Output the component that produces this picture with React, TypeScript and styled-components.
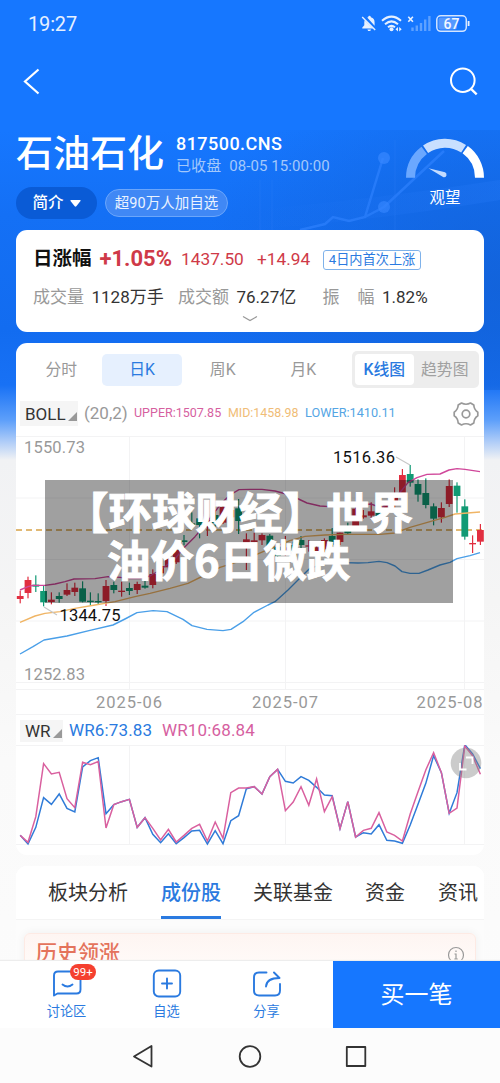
import React from "react";
import styled, { createGlobalStyle } from "styled-components";

const Global = createGlobalStyle`
  *{box-sizing:border-box}
  html,body{margin:0;padding:0}
  body{width:500px;height:1083px;overflow:hidden;font-family:Roboto,"Noto Sans CJK SC",sans-serif;}
  svg{display:block}
`;

const BLUE = "#1677ff";
const INK = "#2a7ae0";
const PINK = "#d6609f";
const RED = "#cf3a48";

const Screen = styled.div`
  position: relative;
  width: 500px;
  height: 1083px;
  overflow: hidden;
  display: flex;
  flex-direction: column;
  background: linear-gradient(180deg, ${BLUE} 0, ${BLUE} 130px, #1470f5 215px, #126cf0 330px, #1871f5 385px, #5d9ffa 420px, #a9c9f8 440px, #f1f2f4 460px, #f5f5f5 600px, #fafafa 760px, #fcfcfc 1083px);
`;
const HeroArt = styled.svg`
  position: absolute;
  left: 0;
  top: 0;
`;
const Main = styled.main`
  position: relative;
  flex: none;
  height: 961px;
  overflow: hidden;
  display: flex;
  flex-direction: column;
`;

/* ---------- header ---------- */
const StatusBar = styled.header`
  flex: none;
  height: 47px;
  padding: 0 28px 0 28px;
  display: flex;
  align-items: center;
  justify-content: space-between;
  color: #e6f0ff;
`;
const Clock = styled.span`
  font-size: 20px;
  line-height: 20px;
  letter-spacing: -0.15px;
`;
const NavBar = styled.nav`
  flex: none;
  height: 69px;
  padding: 0 21px 0 22px;
  display: flex;
  align-items: center;
  justify-content: space-between;
`;
const Hero = styled.section`
  flex: none;
  height: 114px;
  padding: 16px 15px 0 16px;
  display: flex;
  justify-content: space-between;
  color: #fff;
`;
const TitleRow = styled.div`
  display: flex;
  height: 46px;
  align-items: center;
`;
const Title = styled.h1`
  margin: 0;
  width: 160px;
  font-size: 37px;
  line-height: 46px;
  font-weight: 500;
  white-space: nowrap;
`;
const Code = styled.div`
  font-size: 18px;
  line-height: 22px;
  font-weight: 500;
  letter-spacing: 0.45px;
`;
const Closed = styled.div`
  display: flex;
  gap: 8px;
  font-size: 15px;
  line-height: 22px;
  letter-spacing: 0.08px;
  color: #a3c8fb;
  white-space: nowrap;
`;
const TagRow = styled.div`
  display: flex;
  align-items: center;
  gap: 8px;
  margin-top: 9px;
`;
const Intro = styled.button`
  width: 81px;
  height: 32px;
  border: 0;
  border-radius: 16px;
  background: #0a5bd6;
  color: #fff;
  font: 500 15.5px/32px Roboto, "Noto Sans CJK SC", sans-serif;
  padding: 0;
  display: flex;
  align-items: center;
  justify-content: center;
  gap: 6px;
`;
const Followers = styled.span`
  width: 123px;
  height: 28px;
  border: 1px solid #6ba6fb;
  border-radius: 14px;
  background: #4088f5;
  font-size: 14.5px;
  line-height: 27px;
  text-align: center;
  color: #eaf3ff;
  white-space: nowrap;
`;
const Gauge = styled.div`
  width: 80px;
  padding-top: 6px;
  display: flex;
  flex-direction: column;
  align-items: center;
  gap: 9px;
  font-size: 15.5px;
  line-height: 22px;
`;

/* ---------- cards ---------- */
const Card = styled.section<{ $h: number; $gap?: number; $open?: boolean }>`
  flex: none;
  width: 468px;
  height: ${(p) => p.$h}px;
  margin: 0 16px ${(p) => p.$gap ?? 11}px;
  background: #fff;
  border-radius: ${(p) => (p.$open ? "11px 11px 0 0" : "11px")};
  overflow: hidden;
`;
const QuoteRow = styled.div<{ $h: number }>`
  height: ${(p) => p.$h}px;
  display: flex;
  align-items: center;
  padding-left: 17px;
`;
const Text = styled.span<{ $w?: number; $s: number; $c: string; $b?: number; $ls?: number }>`
  flex: none;
  width: ${(p) => (p.$w ? p.$w + "px" : "auto")};
  font-size: ${(p) => p.$s}px;
  color: ${(p) => p.$c};
  font-weight: ${(p) => p.$b ?? 400};
  letter-spacing: ${(p) => p.$ls ?? 0}px;
  line-height: 1.3;
  white-space: nowrap;
`;
const RiseTag = styled.span`
  width: 98px;
  height: 20px;
  margin-top: 2px;
  border: 1px solid #7fb2ea;
  border-radius: 3px;
  color: ${INK};
  font-size: 13.2px;
  line-height: 18px;
  text-align: center;
  white-space: nowrap;
`;
const Expand = styled.div`
  display: flex;
  justify-content: center;
`;

/* ---------- chart card ---------- */
const PeriodRow = styled.div`
  height: 53px;
  display: flex;
  align-items: center;
  padding-left: 5px;
`;
const Period = styled.button<{ $on?: boolean }>`
  flex: none;
  width: 80.7px;
  height: 32px;
  border: 0;
  padding: 0;
  border-radius: 5px;
  background: ${(p) => (p.$on ? "#e6f0fe" : "transparent")};
  color: ${(p) => (p.$on ? INK : "#999")};
  font: 400 15.8px/32px Roboto, "Noto Sans CJK SC", sans-serif;
`;
const Toggle = styled.div`
  flex: none;
  width: 127px;
  height: 37px;
  margin-left: 8px;
  padding: 3px;
  border-radius: 5px;
  background: #ededed;
  display: flex;
`;
const ToggleItem = styled.button<{ $on?: boolean }>`
  width: ${(p) => (p.$on ? 59 : 62)}px;
  height: 31px;
  border: 0;
  padding: 0;
  border-radius: 4px;
  white-space: nowrap;
  background: ${(p) => (p.$on ? "#fff" : "transparent")};
  color: ${(p) => (p.$on ? INK : "#a0a0a0")};
  font: ${(p) => (p.$on ? 500 : 400)} 15.8px/31px Roboto, "Noto Sans CJK SC", sans-serif;
`;
const IndicatorRow = styled.div<{ $h: number }>`
  height: ${(p) => p.$h}px;
  padding: 1px 5px 0 4px;
  display: flex;
  align-items: center;
`;
const Picker = styled.span<{ $w: number; $h: number }>`
  flex: none;
  width: ${(p) => p.$w}px;
  height: ${(p) => p.$h}px;
  margin-right: 6px;
  padding-left: 5px;
  background: #f5f5f5;
  color: #333;
  font-size: 17px;
  display: flex;
  align-items: center;
  gap: 2px;
`;
const Spacer = styled.span`
  flex: 1;
`;

/* ---------- sections ---------- */
const Tabs = styled.div`
  height: 54px;
  padding-left: 32px;
  display: flex;
  background: #fff;
  border-bottom: 1px solid #f4f4f4;
`;
const Tab = styled.span<{ $w: number; $mr: number; $on?: boolean }>`
  flex: none;
  width: ${(p) => p.$w}px;
  margin-right: ${(p) => p.$mr}px;
  height: 53px;
  font-size: 20px;
  line-height: 54px;
  white-space: nowrap;
  font-weight: ${(p) => (p.$on ? 500 : 400)};
  color: ${(p) => (p.$on ? INK : "#333")};
  border-bottom: ${(p) => (p.$on ? `3px solid ${INK}` : "0")};
`;
const SectionBody = styled.div`
  height: 60px;
  padding: 13px 8px 0;
  background: #fcfcfc;
`;
const Leaders = styled.div`
  height: 60px;
  padding: 6px 10px 0 11px;
  border: 1px solid #fdeae4;
  border-radius: 6px;
  background: linear-gradient(180deg, #fef5f2, #fffaf8 28px);
  box-shadow: 0 0 10px rgba(0, 0, 0, 0.06);
  display: flex;
  justify-content: space-between;
`;

/* ---------- bottom ---------- */
const ActionBar = styled.footer`
  position: relative;
  flex: none;
  height: 67px;
  display: flex;
  background: #fff;
  box-shadow: 0 -1px 1px #ededed;
`;
const Action = styled.div<{ $w: number }>`
  position: relative;
  width: ${(p) => p.$w}px;
  padding-top: 8px;
  display: flex;
  flex-direction: column;
  align-items: center;
  font-size: 13.2px;
  line-height: 20px;
  color: ${INK};
`;
const ActionLabel = styled.span`
  margin-top: 3px;
`;
const Badge = styled.span`
  position: absolute;
  left: 70px;
  top: 3px;
  width: 26px;
  height: 16px;
  border-radius: 8px;
  background: #f5402f;
  color: #fff;
  font-size: 11.5px;
  line-height: 16px;
  text-align: center;
`;
const Buy = styled.button`
  flex: 1;
  border: 0;
  padding: 0;
  background: ${BLUE};
  color: #fff;
  font: 400 24px/66px Roboto, "Noto Sans CJK SC", sans-serif;
`;
const SystemNav = styled.div`
  height: 55px;
  background: #fcfcfc;
  display: flex;
  align-items: center;
  padding-left: 132px;
`;

const Caption = styled.div`
  position: absolute;
  left: 45px;
  top: 480px;
  width: 408px;
  height: 123px;
  padding: 7px 0 0 20px;
  background: rgba(0, 0, 0, 0.373);
  color: #fff;
  font: 700 43.5px/48px "Noto Sans CJK SC", sans-serif;
  -webkit-text-stroke: 1px #fff;
  white-space: nowrap;
`;
const CaptionLine = styled.div<{ $indent?: number }>`
  padding-left: ${(p) => p.$indent ?? 0}px;
`;

/* ---------- data: y values are thirds of a pixel below the panel top ---------- */
type Candle = [up: 0 | 1, top: number, bottom: number, high: number, low: number];
const candles: Candle[] = [
  [1, 498, 507, 482, 520], [1, 450, 489, 440, 505], [0, 464, 470, 436, 486], [0, 483, 517, 468, 529],
  [1, 509, 516, 487, 523], [0, 498, 507, 487, 518], [1, 480, 494, 460, 498], [1, 473, 486, 458, 498],
  [0, 475, 515, 454, 517], [0, 512, 516, 487, 527], [0, 513, 517, 490, 525], [1, 468, 513, 450, 528],
  [0, 465, 480, 455, 490], [1, 482, 486, 455, 500], [0, 474, 483, 458, 495], [1, 462, 480, 455, 492],
  [0, 467, 473, 453, 476], [1, 432, 465, 418, 475], [1, 408, 430, 400, 440], [1, 385, 412, 375, 422],
  [1, 360, 397, 350, 402], [0, 331, 336, 315, 346], [0, 280, 286, 247, 300], [0, 265, 285, 240, 325],
  [1, 270, 286, 240, 318], [0, 255, 280, 240, 290], [1, 231, 278, 228, 282], [1, 240, 262, 232, 270],
  [0, 235, 273, 207, 312], [1, 328, 341, 310, 420], [1, 331, 336, 308, 350], [1, 315, 331, 310, 345],
  [0, 317, 350, 312, 355], [0, 350, 378, 345, 383], [1, 352, 370, 318, 378], [0, 345, 380, 335, 384],
  [0, 330, 345, 318, 370], [1, 346, 350, 330, 365], [1, 352, 365, 344, 372], [1, 330, 358, 325, 366],
  [0, 318, 344, 294, 350], [1, 308, 336, 308, 345], [0, 296, 310, 278, 315], [1, 236, 290, 230, 292],
  [1, 256, 262, 240, 266], [1, 244, 257, 217, 268], [0, 246, 258, 240, 264], [1, 225, 248, 215, 252],
  [1, 190, 225, 172, 235], [1, 135, 195, 117, 237], [0, 132, 158, 105, 170], [0, 162, 194, 148, 215],
  [0, 189, 225, 145, 235], [0, 229, 266, 220, 286], [1, 234, 262, 217, 278], [1, 168, 222, 148, 231],
  [0, 167, 198, 157, 248], [0, 229, 320, 208, 329], [1, 339, 343, 316, 369], [1, 300, 335, 282, 345],
];
const upper = [[20, 480], [28, 470], [33, 466], [45, 466], [55, 462], [65, 455], [74, 447], [95, 446], [108, 440], [120, 442], [130, 446], [140, 446], [150, 438], [160, 420], [175, 387], [184, 353], [195, 320], [204, 288], [215, 245], [222, 218], [230, 195], [239, 179], [250, 178], [262, 178], [275, 183], [290, 195], [307, 219], [320, 228], [330, 230], [350, 229], [362, 224], [371, 222], [378, 230], [383, 231], [392, 213], [402, 180], [408, 158], [417, 143], [427, 133], [440, 132], [449, 120], [457, 116], [465, 118], [480, 125]];
const middle = [[20, 577], [35, 558], [45, 550], [60, 545], [75, 535], [95, 525], [115, 515], [135, 500], [150, 490], [170, 475], [188, 460], [205, 435], [220, 412], [235, 398], [252, 379], [275, 350], [290, 332], [305, 319], [325, 315], [345, 313], [380, 313], [395, 309], [410, 292], [430, 275], [445, 262], [455, 252], [480, 246]];
const lower = [[20, 672], [33, 650], [44, 630], [67, 618], [90, 601], [113, 585], [125, 567], [137, 548], [153, 542], [167, 545], [183, 568], [192, 587], [207, 598], [223, 602], [231, 598], [243, 575], [254, 547], [268, 525], [275, 515], [288, 480], [303, 435], [310, 415], [325, 400], [345, 398], [358, 399], [368, 398], [379, 394], [387, 398], [395, 408], [402, 425], [410, 430], [419, 430], [428, 420], [440, 405], [450, 397], [457, 386], [470, 377], [480, 368]];
const wr10 = [376, 397, 320, 161, 192, 187, 266, 293, 157, 164, 155, 354, 284, 275, 268, 352, 323, 355, 390, 358, 396, 376, 355, 343, 393, 336, 385, 248, 234, 234, 230, 252, 200, 178, 302, 276, 230, 286, 207, 305, 260, 356, 275, 381, 361, 355, 308, 366, 376, 393, 312, 245, 180, 128, 188, 310, 294, 108, 137, 193];
const wr6 = [376, 402, 352, 263, 283, 252, 295, 306, 171, 152, 143, 311, 284, 275, 268, 352, 323, 373, 398, 371, 401, 383, 363, 361, 402, 362, 401, 332, 317, 236, 230, 252, 200, 178, 214, 219, 200, 211, 232, 255, 257, 356, 275, 381, 368, 372, 344, 391, 393, 400, 345, 283, 220, 137, 188, 310, 248, 104, 132, 176];

const xAt = (i: number) => 20.2 + 7.8 * i;
const band = (pts: number[][]) => pts.map(([x, y]) => `${x},${430 + y / 3}`).join(" ");
const wrLine = (v: number[]) => v.map((y, i) => `${xAt(i)},${710 + y / 3}`).join(" ");

function KLine() {
  return (
    <svg width="468" height="285" viewBox="16 430 468 285" fontFamily="Roboto, sans-serif" fontSize="16.5">
      <g stroke="#f3f3f4" strokeWidth="1">
        {[436.5, 498, 559.5, 621, 682.5, 689.5, 714.5].map((y) => <line key={y} x1="16" x2="484" y1={y} y2={y} />)}
        {[129.5, 285.5, 464.5].map((x) => <line key={x} x1={x} x2={x} y1="436" y2="689" />)}
      </g>
      <line x1="16" x2="484" y1="530" y2="530" stroke="#d8a347" strokeWidth="1.6" strokeDasharray="6 4" />
      {candles.map(([up, t, b, h, l], i) => {
        const c = up ? "#e12e40" : "#119a74";
        return (
          <g key={i} fill={c}>
            <rect x={xAt(i) - 0.6} y={430 + h / 3} width="1.2" height={(l - h) / 3} />
            <rect x={xAt(i) - 3.4} y={430 + t / 3} width="6.8" height={Math.max(1.2, (b - t) / 3)} />
          </g>
        );
      })}
      <g fill="none" strokeWidth="1.4" strokeLinejoin="round">
        <polyline points={band(middle)} stroke="#f0b565" />
        <polyline points={band(upper)} stroke="#d0479a" />
        <polyline points={band(lower)} stroke="#4a9fe8" />
      </g>
      <path d="M44 607l13 8M396 457l14 8" stroke="#c8c8c8" strokeWidth="1.2" />
      <g fill="#999">
        <text x="24" y="452.5" textLength="61">1550.73</text>
        <text x="24" y="680" textLength="61">1252.83</text>
        <text x="96" y="708" textLength="66">2025-06</text>
        <text x="252" y="708" textLength="66">2025-07</text>
        <text x="416.5" y="708" textLength="66">2025-08</text>
      </g>
      <g fill="#111">
        <text x="59.5" y="621" textLength="61">1344.75</text>
        <text x="333" y="463" textLength="62">1516.36</text>
      </g>
    </svg>
  );
}

function WrChart() {
  return (
    <svg width="468" height="110" viewBox="16 745 468 110" fill="none">
      <g stroke="#f3f3f4">
        <line x1="16" x2="484" y1="745.5" y2="745.5" />
        <line x1="16" x2="484" y1="844.5" y2="844.5" />
        {[129.5, 285.5, 464.5].map((x) => <line key={x} x1={x} x2={x} y1="745" y2="844" />)}
      </g>
      <polyline points={wrLine(wr6)} stroke="#2f7bd8" strokeWidth="1.5" />
      <polyline points={wrLine(wr10)} stroke="#d9609f" strokeWidth="1.5" />
      <circle cx="466" cy="763" r="15.3" fill="rgba(130,130,130,.42)" />
      <path d="M466 757.5h6.5v6.5M460 763v6.5h6.5" stroke="#fff" strokeWidth="1.8" />
    </svg>
  );
}

const CornerMark = styled.svg`
  margin-top: 4px;
`;
const Corner = () => (
  <CornerMark width="9" height="10" viewBox="0 0 9 10"><path d="M9 1v9H0z" fill="#999" /></CornerMark>
);
const InfoIcon = styled.svg`
  margin-top: 6px;
`;

function StatusIcons() {
  return (
    <svg width="112" height="20" viewBox="360 14 112 20" fill="none">
      <path d="M367.2 17.6l.9-.4q.3-1.4 1.400-1.400t1.400 1.400q3.700 1 3.700 5.300v3.200zM364.700 20.200l8.400 8.300H362.300v-1l2-2.200v-3.300q0-.9.400-1.800zM367.400 29.400h3.600l-.7 1.500h-2.200z" fill="#e6f0ff" />
      <path d="M362.200 17l13 13" stroke="#e6f0ff" strokeWidth="1.400" />
      <g stroke="#e6f0ff" strokeWidth="2">
        <path d="M382 20.800q9.500-8.400 19 0M385 24.200q6.500-5.600 13 0M388 27.300q3.500-2.900 7 0" />
      </g>
      <circle cx="391.500" cy="29.300" r="2" fill="#e6f0ff" />
      <path d="M398 27l-2.500 2.300 2.500 2.300zM399.200 27l2.500 2.300-2.500 2.300z" fill="#e6f0ff" />
      <path d="M408.300 16.700l4.600 5M412.900 16.700l-4.600 5" stroke="#e6f0ff" strokeWidth="1.600" />
      <path d="M412.500 31v-3.600M416.800 31v-5.500M421 31v-8M425.200 31v-11.500M429.400 31v-15" stroke="#5ea1ff" strokeWidth="2.400" />
      <rect x="436.800" y="15.800" width="29.500" height="15.500" rx="4" stroke="#d4e5ff" strokeWidth="1.500" />
      <rect x="438.500" y="17.500" width="18.500" height="12" rx="2" fill="#5598ff" />
      <path d="M468.600 21v5" stroke="#e6f0ff" strokeWidth="1.800" />
      <text x="451.500" y="28.500" fill="#f2f7ff" fontSize="14" fontWeight="500" textAnchor="middle" fontFamily="Roboto, sans-serif">67</text>
    </svg>
  );
}

function GaugeArt() {
  return (
    <svg width="78" height="40" viewBox="406 138 78 40" fill="none" strokeWidth="9">
      <path d="M410.500 177.700A34.500 34.500 0 0 1 424.200 150.300" stroke="#6ba8ff" />
      <path d="M425.600 149.300A34.500 34.500 0 0 1 463.600 148.700" stroke="#c9dfff" />
      <path d="M465.200 149.700A34.500 34.500 0 0 1 479.500 177.700" stroke="#fff" />
      <path d="M428.500 168.300L445 172.200A2.700 2.700 0 0 1 443.500 177.300Z" fill="#c4dcff" />
    </svg>
  );
}

export default function App() {
  return (
    <Screen>
      <Global />
      <HeroArt width="500" height="440" viewBox="0 0 500 440" fill="none">
        <defs>
          <radialGradient id="shade" cx="1" cy=".6" r="1">
            <stop offset="0" stopColor="#125fd2" stopOpacity=".7" />
            <stop offset="1" stopColor="#125fd2" stopOpacity="0" />
          </radialGradient>
          <linearGradient id="wave" x1="0" y1="0" x2="1" y2="0">
            <stop offset="0" stopColor="#2377f5" stopOpacity="0" />
            <stop offset="1" stopColor="#2377f5" stopOpacity=".35" />
          </linearGradient>
        </defs>
        <rect x="200" y="130" width="300" height="260" fill="url(#shade)" />
        <path d="M300 230l25-6 8-7 16 4 16-4 18-59M365 217l19-10 60-56" stroke="#2f83ff" strokeWidth="2.500" opacity=".65" />
        <circle cx="384" cy="158" r="6" fill="#3788ff" opacity=".7" />
        <circle cx="384" cy="207" r="6" fill="#3788ff" opacity=".7" />
        <path d="M395 140v90M260 180v50M272 180v50" stroke="#2d80fa" strokeWidth="1" opacity=".3" />
        <path d="M250 210q120-10 250-30v20q-120 20-250 30z" fill="url(#wave)" />
      </HeroArt>
      <Main>
        <StatusBar>
          <Clock>19:27</Clock>
          <StatusIcons />
        </StatusBar>
        <NavBar>
          <svg width="20" height="28" viewBox="0 0 20 28" fill="none"><path d="M16.500 1.500L3 13.500L16.500 25.500" stroke="#fff" strokeWidth="2.200" /></svg>
          <svg width="30" height="30" viewBox="0 0 30 30" fill="none" stroke="#fff" strokeWidth="2"><circle cx="13.800" cy="13.200" r="11.800" /><path d="M22 21.800l5.700 5.500" strokeWidth="2.300" /></svg>
        </NavBar>
        <Hero>
          <div>
            <TitleRow>
              <Title>石油石化</Title>
              <div>
                <Code>817500.CNS</Code>
                <Closed><span>已收盘</span><span>08-05 15:00:00</span></Closed>
              </div>
            </TitleRow>
            <TagRow>
              <Intro>简介<svg width="11" height="7" viewBox="0 0 11 7"><path d="M1 0h9q1 0 .5 1L6.300 6.300q-.8.800-1.600 0L.5 1Q0 0 1 0z" fill="#fff" /></svg></Intro>
              <Followers>超90万人加自选</Followers>
            </TagRow>
          </div>
          <Gauge><GaugeArt />观望</Gauge>
        </Hero>

        <Card $h={102}>
          <QuoteRow $h={58}>
            <Text $w={66.5} $s={19.5} $c="#111" $b={700}>日涨幅</Text>
            <Text $w={81.5} $s={22} $c={RED} $b={700}>+1.05%</Text>
            <Text $w={76} $s={17.300} $c={RED}>1437.50</Text>
            <Text $w={66} $s={17.300} $c={RED}>+14.94</Text>
            <RiseTag>4日内首次上涨</RiseTag>
          </QuoteRow>
          <QuoteRow $h={18}>
            <Text $w={58.500} $s={17} $c="#999">成交量</Text>
            <Text $w={86.500} $s={17} $c="#333">1128万手</Text>
            <Text $w={58.500} $s={17} $c="#999">成交额</Text>
            <Text $w={86} $s={17} $c="#333">76.27亿</Text>
            <Text $w={35} $s={17} $c="#999">振</Text>
            <Text $w={24.500} $s={17} $c="#999">幅</Text>
            <Text $s={17} $c="#333">1.82%</Text>
          </QuoteRow>
          <Expand><svg width="16" height="16" viewBox="0 0 16 16" fill="none"><path d="M1 10.500l7 4 7-4" stroke="#999" strokeWidth="1.200" /></svg></Expand>
        </Card>

        <Card $h={512}>
          <PeriodRow>
            <Period>分时</Period>
            <Period $on>日K</Period>
            <Period>周K</Period>
            <Period>月K</Period>
            <Toggle><ToggleItem $on>K线图</ToggleItem><ToggleItem>趋势图</ToggleItem></Toggle>
          </PeriodRow>
          <IndicatorRow $h={34}>
            <Picker $w={58} $h={25}>BOLL<Corner /></Picker>
            <Text $w={50} $s={17} $c="#999">(20,2)</Text>
            <Text $w={94} $s={12.500} $c={PINK}>UPPER:1507.85</Text>
            <Text $w={77} $s={12.400} $c="#f0bd77">MID:1458.98</Text>
            <Text $s={12.700} $c="#54a5e4">LOWER:1410.11</Text>
            <Spacer />
            <svg width="26" height="26" viewBox="0 0 26 26" fill="none" stroke="#999" strokeWidth="1.700" strokeLinejoin="round">
              <path d="M8.500 2Q13 4.500 17.500 2L20.800 4Q21 8.600 24.800 11.200V14.800Q21 17.400 20.800 22L17.500 24Q13 21.500 8.500 24L5.200 22Q5 17.400 1.200 14.800V11.200Q5 8.600 5.200 4Z" />
              <circle cx="13" cy="13" r="3.800" />
            </svg>
          </IndicatorRow>
          <KLine />
          <IndicatorRow $h={30}>
            <Picker $w={43} $h={22}>WR<Corner /></Picker>
            <Text $w={93} $s={17} $c={INK} $ls={0.15}>WR6:73.83</Text>
            <Text $s={17} $c={PINK} $ls={0.15}>WR10:68.84</Text>
          </IndicatorRow>
          <WrChart />
        </Card>

        <Card $h={95} $gap={0} $open>
          <Tabs>
            <Tab $w={80} $mr={33}>板块分析</Tab>
            <Tab $w={60} $mr={32} $on>成份股</Tab>
            <Tab $w={80} $mr={32}>关联基金</Tab>
            <Tab $w={40} $mr={33}>资金</Tab>
            <Tab $w={40} $mr={0}>资讯</Tab>
          </Tabs>
          <SectionBody>
            <Leaders>
              <Text $s={21} $c="#e4735c" $b={500}>历史领涨</Text>
              <InfoIcon width="18" height="18" viewBox="0 0 18 18" fill="none" stroke="#999" strokeWidth="1.200"><circle cx="9" cy="9" r="7.500" /><path d="M9 4.500v1.600M7.500 8H9v5M7.300 13h3.500" /></InfoIcon>
            </Leaders>
          </SectionBody>
        </Card>
      </Main>

      <ActionBar>
        <Action $w={133}>
          <svg width="30" height="30" viewBox="0 0 30 30" fill="none" stroke={INK} strokeWidth="1.900" strokeLinejoin="round" strokeLinecap="round"><path d="M2 26.500V6.500q0-4 4-4h18.500q4 0 4 4v14q0 4-4 4H5.500zM10.500 15.500q5 4 10 0" /></svg>
          <ActionLabel>讨论区</ActionLabel>
          <Badge>99+</Badge>
        </Action>
        <Action $w={67}>
          <svg width="30" height="30" viewBox="0 0 30 30" fill="none" stroke={INK} strokeWidth="1.900" strokeLinecap="round"><rect x="1.800" y="1.500" width="26.400" height="26" rx="5" /><path d="M15 9.500v10M10 14.500h10" /></svg>
          <ActionLabel>自选</ActionLabel>
        </Action>
        <Action $w={133}>
          <svg width="30" height="30" viewBox="0 0 30 30" fill="none" stroke={INK} strokeWidth="1.900" strokeLinecap="round" strokeLinejoin="round"><path d="M14.500 3.500H7q-5 0-5 5v13q0 5 5 5h16q5 0 5-5v-6.500M14 17.500q.5-8.500 13.500-8.500L22 3.500" /></svg>
          <ActionLabel>分享</ActionLabel>
        </Action>
        <Buy>买一笔</Buy>
      </ActionBar>
      <SystemNav>
        <svg width="240" height="26" viewBox="132 1042 240 26" fill="none" stroke="#333" strokeWidth="1.800" strokeLinejoin="round"><path d="M134 1055.500L151.500 1045V1065.500Z" /><circle cx="250" cy="1055.500" r="10.300" /><rect x="346.800" y="1046" width="18.500" height="19" /></svg>
      </SystemNav>

      <Caption>
        <CaptionLine>【环球财经】世界</CaptionLine>
        <CaptionLine $indent={42}>油价6日微跌</CaptionLine>
      </Caption>
    </Screen>
  );
}
